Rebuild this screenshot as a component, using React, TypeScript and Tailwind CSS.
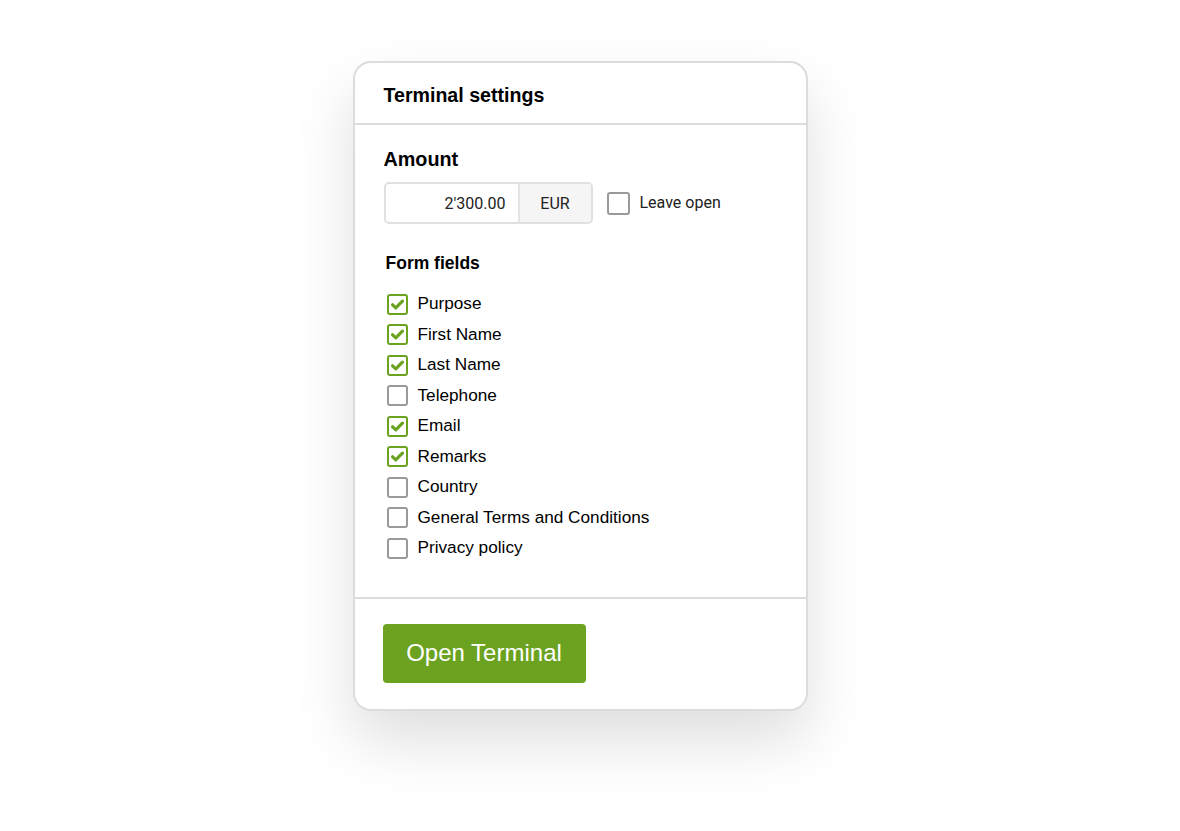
import { useState } from 'react';

const fields = [
  { label: 'Purpose', checked: true },
  { label: 'First Name', checked: true },
  { label: 'Last Name', checked: true },
  { label: 'Telephone', checked: false },
  { label: 'Email', checked: true },
  { label: 'Remarks', checked: true },
  { label: 'Country', checked: false },
  { label: 'General Terms and Conditions', checked: false },
  { label: 'Privacy policy', checked: false },
];

const Box = ({ checked }: { checked: boolean }) => (
  <span
    className={`flex h-[21px] w-[21px] shrink-0 items-center justify-center rounded-[3px] border-2 bg-white ${
      checked ? 'border-[#6ba320]' : 'border-[#9a9a9a]'
    }`}
  >
    {checked && (
      <svg width="13" height="11" viewBox="0 0 13 11" fill="none">
        <path d="M1.6 5.8 L4.8 8.8 L11.4 2.2" stroke="#6ba320" strokeWidth="3.2" strokeLinecap="round" strokeLinejoin="round" />
      </svg>
    )}
  </span>
);

const App = () => {
  const [items, setItems] = useState(fields);
  const [leaveOpen, setLeaveOpen] = useState(false);

  const toggle = (i: number) =>
    setItems((prev) => prev.map((f, idx) => (idx === i ? { ...f, checked: !f.checked } : f)));

  return (
    <div className="flex min-h-[831px] w-full justify-center bg-white pt-[61px] pr-[20px] font-['Liberation_Sans',Arial,sans-serif] text-black">
      <div className="h-fit w-[455px] rounded-[18px] border-2 border-[#dcdcdc] bg-white shadow-[0_30px_60px_rgba(0,0,0,0.13)]">
        <div className="flex h-[60px] items-center px-[29px] pt-[6px]">
          <h2 className="text-[19.6px] font-bold">Terminal settings</h2>
        </div>
        <div className="border-t-2 border-[#dcdcdc] px-[29px] pt-[23px] pb-[33px]">
          <h3 className="text-[19.8px] leading-[23px] font-bold">Amount</h3>
          <div className="mt-[11px] flex items-center">
            <div className="flex h-[42px] w-[209px] overflow-hidden rounded-[5px] border-2 border-[#e0e0e0] font-['Roboto',sans-serif] text-[16px] text-[#222]">
              <div className="flex flex-1 items-center justify-end border-r-2 border-[#e4e4e4] pt-[2px] pr-[12px]">2'300.00</div>
              <div className="flex w-[71px] items-center justify-center bg-[#f5f5f5] pt-[2px]">EUR</div>
            </div>
            <button
              className="ml-[14px] flex items-center gap-[10px] font-['Roboto',sans-serif] text-[16px] text-[#222]"
              onClick={() => setLeaveOpen(!leaveOpen)}
            >
              <span className="h-[23px] w-[23px] rounded-[3px] border-2 border-[#9a9a9a]" />
              Leave open
            </button>
          </div>
          <h3 className="mt-[29px] ml-[2px] text-[17.5px] leading-[20px] font-bold">Form fields</h3>
          <ul className="mt-[16px] ml-[3px]">
            {items.map((f, i) => (
              <li
                key={f.label}
                className="flex h-[30.5px] cursor-pointer items-center gap-[10px] text-[17.2px]"
                onClick={() => toggle(i)}
              >
                <Box checked={f.checked} />
                <span>{f.label}</span>
              </li>
            ))}
          </ul>
        </div>
        <div className="border-t-2 border-[#dcdcdc] px-[28px] pt-[25px] pb-[26px]">
          <button className="h-[59px] w-[203px] rounded-[4px] bg-[#6ba320] text-[24px] text-white">
            Open Terminal
          </button>
        </div>
      </div>
    </div>
  );
};

export default App;
